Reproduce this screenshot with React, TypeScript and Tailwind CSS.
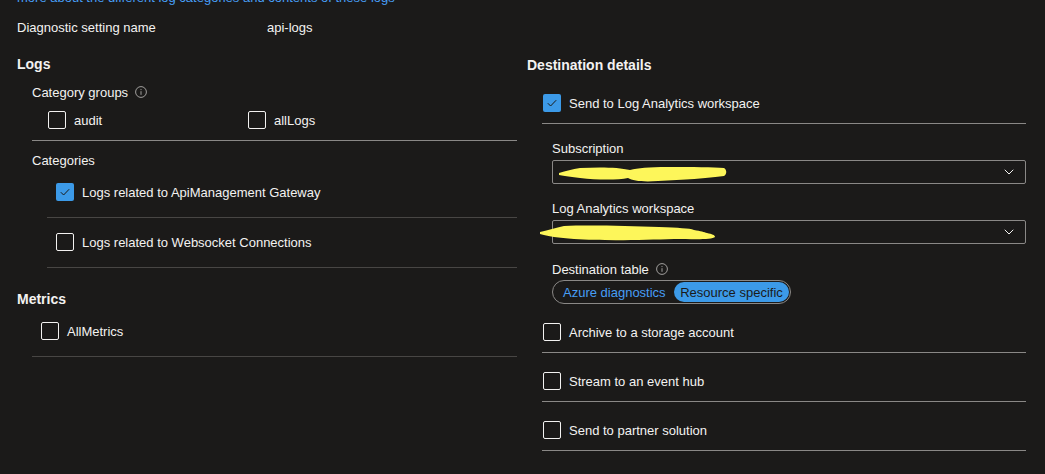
import React from 'react';
import { ChevronDown } from 'lucide-react';

const font = { fontFamily: '"Liberation Sans", Arial, sans-serif' };

function Checkbox({ checked = false }: { checked?: boolean }) {
  if (checked) {
    return (
      <span className="flex h-[18px] w-[18px] shrink-0 items-center justify-center rounded-[2px] bg-[#3c9ae8]">
        <svg width="14" height="14" viewBox="0 0 14 14" fill="none">
          <path d="M2.8 7.2 L5.6 10 L11.2 4.2" stroke="#1b1a19" strokeWidth="1" />
        </svg>
      </span>
    );
  }
  return <span className="h-[18px] w-[18px] shrink-0 rounded-[2px] border border-[#f3f2f1]" />;
}

function InfoIcon() {
  return (
    <svg width="12" height="12" viewBox="0 0 12 12" fill="none" className="shrink-0">
      <circle cx="6" cy="6" r="5.4" stroke="#a19f9d" strokeWidth="1" />
      <path d="M6 5.2 V8.8" stroke="#a19f9d" strokeWidth="1" />
      <circle cx="6" cy="3.6" r="0.6" fill="#a19f9d" />
    </svg>
  );
}

function Text({ children, className = '' }: { children: React.ReactNode; className?: string }) {
  return <span className={`pt-[2px] ${className}`}>{children}</span>;
}

function CheckRow({ label, checked, className = '' }: { label: string; checked?: boolean; className?: string }) {
  return (
    <div className={`flex h-[20px] items-center gap-[8px] ${className}`}>
      <Checkbox checked={checked} />
      <Text>{label}</Text>
    </div>
  );
}

function Select({ children }: { children?: React.ReactNode }) {
  return (
    <div className="relative ml-[25px] mt-[2px] flex h-[24px] w-[474px] items-center justify-end rounded-[2px] border border-[#8a8886] pr-[8px]">
      <ChevronDown className="h-[16px] w-[16px] text-[#f3f2f1]" strokeWidth={1.5} />
      {children}
    </div>
  );
}

export default function App() {
  return (
    <div
      className="h-[474px] w-[1045px] overflow-hidden bg-[#1b1a19] pl-[17px] text-[13px] text-[#f3f2f1]"
      style={font}
    >
      <div className="h-[5px] overflow-hidden">
        <p className="-mt-[10px] leading-[16px] text-[#479ef5]">
          more about the different log categories and contents of these logs
        </p>
      </div>

      <div className="mt-[12px] flex h-[20px] items-center">
        <Text className="w-[250px]">Diagnostic setting name</Text>
        <Text>api-logs</Text>
      </div>

      <div className="flex gap-[10px]">
        {/* Logs / metrics */}
        <div className="w-[500px]">
          <div className="mt-[16px] flex h-[20px] items-center text-[14px] font-bold">
            <Text>Logs</Text>
          </div>
          <div className="ml-[15px] mt-[9px] flex h-[20px] items-center gap-[7px]">
            <Text>Category groups</Text>
            <InfoIcon />
          </div>
          <div className="ml-[31px] mt-[8px] flex">
            <CheckRow label="audit" className="w-[200px]" />
            <CheckRow label="allLogs" />
          </div>
          <div className="ml-[15px] mt-[10px] h-px bg-[#8a8886]" />
          <div className="ml-[15px] mt-[9px] flex h-[20px] items-center">
            <Text>Categories</Text>
          </div>
          <CheckRow label="Logs related to ApiManagement Gateway" checked className="ml-[39px] mt-[12px]" />
          <div className="ml-[30px] mt-[15px] h-px bg-[#484644]" />
          <CheckRow label="Logs related to Websocket Connections" className="ml-[39px] mt-[14px]" />
          <div className="ml-[30px] mt-[15px] h-px bg-[#484644]" />
          <div className="mt-[20px] flex h-[20px] items-center text-[14px] font-bold">
            <Text>Metrics</Text>
          </div>
          <CheckRow label="AllMetrics" className="ml-[24px] mt-[13px]" />
          <div className="ml-[15px] mt-[15px] h-px bg-[#484644]" />
        </div>

        {/* Destination */}
        <div className="w-[499px]">
          <div className="mt-[17px] flex h-[20px] items-center text-[14px] font-bold">
            <Text>Destination details</Text>
          </div>
          <CheckRow label="Send to Log Analytics workspace" checked className="ml-[16px] mt-[19px]" />
          <div className="ml-[15px] mt-[10px] h-px bg-[#8a8886]" />

          <div className="ml-[25px] mt-[14px] flex h-[20px] items-center">
            <Text>Subscription</Text>
          </div>
          <Select>
            <svg className="absolute left-[5px] top-[4px]" width="170" height="20" viewBox="0 0 170 20">
              <path
                d="M1 8 C8 6 14 4 22 3 C40 2 60 2 72 5 C80 3 90 2 110 2 C135 2 155 2 166 3 C169 5 169 9 166 11 C150 13 125 15 100 16 C85 17 75 16 70 13 C60 15 40 15 22 13 C14 12 6 11 1 10 Z"
                fill="#fdf65a"
              />
            </svg>
          </Select>

          <div className="ml-[25px] mt-[14px] flex h-[20px] items-center">
            <Text>Log Analytics workspace</Text>
          </div>
          <Select>
            <svg className="absolute -left-[14px] top-[2px]" width="178" height="20" viewBox="0 0 178 20">
              <path
                d="M1 9 C10 7 16 5 25 3 C50 2 90 3 120 4 C140 5 150 5 155 7 C162 8 165 9 168 10 C173 11 176 12 176 14 C173 17 155 16 135 16 C105 17 65 18 35 16 C20 15 8 13 1 11 Z"
                fill="#fdf65a"
              />
            </svg>
          </Select>

          <div className="ml-[25px] mt-[15px] flex h-[20px] items-center gap-[7px]">
            <Text>Destination table</Text>
            <InfoIcon />
          </div>
          <div className="ml-[25px] mt-[1px] flex h-[24px] w-[239px] items-center justify-between rounded-full border border-[#8a8886] pl-[10px] pr-[1px]">
            <Text className="text-[#479ef5]">Azure diagnostics</Text>
            <span className="flex h-[20px] w-[115px] items-center justify-center rounded-full bg-[#3c9ae8] pt-[2px] text-[#1b1a19]">
              Resource specific
            </span>
          </div>

          <CheckRow label="Archive to a storage account" className="ml-[16px] mt-[18px]" />
          <div className="ml-[15px] mt-[10px] h-px bg-[#8a8886]" />
          <CheckRow label="Stream to an event hub" className="ml-[16px] mt-[18px]" />
          <div className="ml-[15px] mt-[10px] h-px bg-[#8a8886]" />
          <CheckRow label="Send to partner solution" className="ml-[16px] mt-[18px]" />
          <div className="ml-[15px] mt-[10px] h-px bg-[#8a8886]" />
        </div>
      </div>
    </div>
  );
}
